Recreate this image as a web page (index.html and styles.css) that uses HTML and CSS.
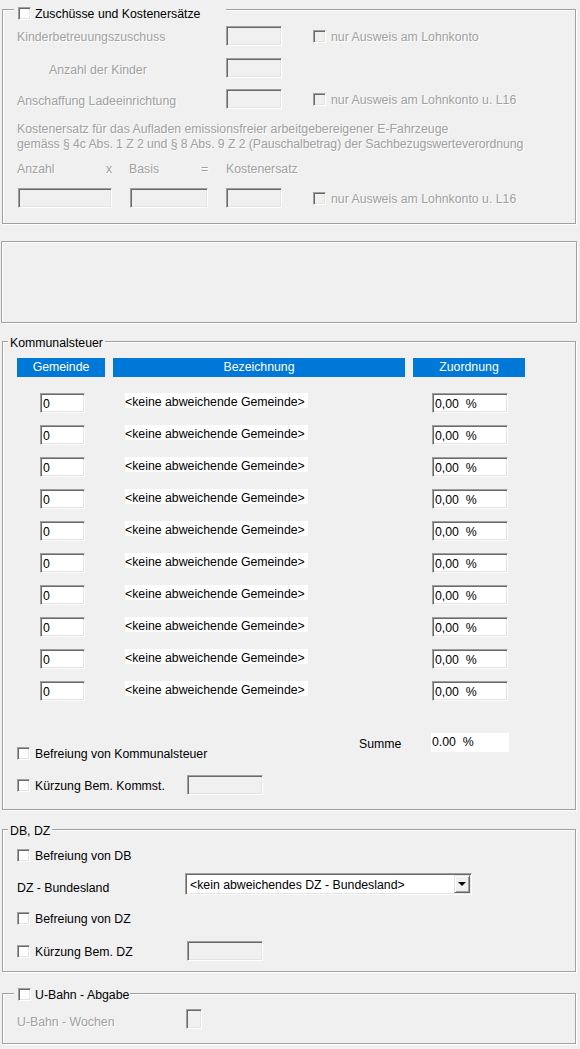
FILE: index.html
```html
<!DOCTYPE html>
<html lang="de">
<head>
<meta charset="utf-8">
<title>Zuschüsse und Kommunalsteuer</title>
<link rel="stylesheet" href="styles.css">
</head>
<body>
<section class="group g1">
  <div class="legend lg-check lg1"><span class="cb"></span><span class="lg-text">Zuschüsse und Kostenersätze</span></div>
  <div class="frow r1">
    <span class="lbl dis w209">Kinderbetreuungszuschuss</span>
    <span class="inp dis w56"></span>
    <span class="cb dis opt"></span><span class="dis opt-text">nur Ausweis am Lohnkonto</span>
  </div>
  <div class="frow r2">
    <span class="lbl dis w209 indent lower">Anzahl der Kinder</span>
    <span class="inp dis w56"></span>
  </div>
  <div class="frow r3">
    <span class="lbl dis w209 lower">Anschaffung Ladeeinrichtung</span>
    <span class="inp dis w56"></span>
    <span class="cb dis opt"></span><span class="dis opt-text">nur Ausweis am Lohnkonto u. L16</span>
  </div>
  <p class="note dis">Kostenersatz für das Aufladen emissionsfreier arbeitgebereigener E-Fahrzeuge<br><span class="tight">gemäss § 4c Abs. 1 Z 2 und § 8 Abs. 9 Z 2 (Pauschalbetrag) der Sachbezugswerteverordnung</span></p>
  <div class="calc-head dis">
    <span class="c-anzahl">Anzahl</span><span class="c-op">x</span><span class="c-basis">Basis</span><span class="c-eq">=</span><span>Kostenersatz</span>
  </div>
  <div class="frow calc-row">
    <span class="inp dis w94"></span>
    <span class="inp dis w78 gap18"></span>
    <span class="inp dis w56 gap18"></span>
    <span class="cb dis opt"></span><span class="dis opt-text">nur Ausweis am Lohnkonto u. L16</span>
  </div>
</section>

<section class="group g2"></section>

<section class="group g3">
  <div class="legend lg-plain"><span class="lg-text">Kommunalsteuer</span></div>
  <div class="heads">
    <div class="head h-gem">Gemeinde</div>
    <div class="head h-bez">Bezeichnung</div>
    <div class="head h-zuo">Zuordnung</div>
  </div>
  <div class="k-rows">
    <div class="krow"><span class="inp w45">0</span><span class="k-name"><span class="k-chip">&lt;keine abweichende Gemeinde&gt;</span></span><span class="inp w76 pct">0,00  %</span></div>
    <div class="krow"><span class="inp w45">0</span><span class="k-name"><span class="k-chip">&lt;keine abweichende Gemeinde&gt;</span></span><span class="inp w76 pct">0,00  %</span></div>
    <div class="krow"><span class="inp w45">0</span><span class="k-name"><span class="k-chip">&lt;keine abweichende Gemeinde&gt;</span></span><span class="inp w76 pct">0,00  %</span></div>
    <div class="krow"><span class="inp w45">0</span><span class="k-name"><span class="k-chip">&lt;keine abweichende Gemeinde&gt;</span></span><span class="inp w76 pct">0,00  %</span></div>
    <div class="krow"><span class="inp w45">0</span><span class="k-name"><span class="k-chip">&lt;keine abweichende Gemeinde&gt;</span></span><span class="inp w76 pct">0,00  %</span></div>
    <div class="krow"><span class="inp w45">0</span><span class="k-name"><span class="k-chip">&lt;keine abweichende Gemeinde&gt;</span></span><span class="inp w76 pct">0,00  %</span></div>
    <div class="krow"><span class="inp w45">0</span><span class="k-name"><span class="k-chip">&lt;keine abweichende Gemeinde&gt;</span></span><span class="inp w76 pct">0,00  %</span></div>
    <div class="krow"><span class="inp w45">0</span><span class="k-name"><span class="k-chip">&lt;keine abweichende Gemeinde&gt;</span></span><span class="inp w76 pct">0,00  %</span></div>
    <div class="krow"><span class="inp w45">0</span><span class="k-name"><span class="k-chip">&lt;keine abweichende Gemeinde&gt;</span></span><span class="inp w76 pct">0,00  %</span></div>
    <div class="krow"><span class="inp w45">0</span><span class="k-name"><span class="k-chip">&lt;keine abweichende Gemeinde&gt;</span></span><span class="inp w76 pct">0,00  %</span></div>
  </div>
  <div class="sum-row">
    <label class="check c-befreiung"><span class="cb"></span><span class="ctext">Befreiung von Kommunalsteuer</span></label>
    <span class="sum-label">Summe</span>
    <span class="sum-box">0.00  %</span>
  </div>
  <div class="frow k-kuerz">
    <label class="check w170"><span class="cb"></span><span class="ctext">Kürzung Bem. Kommst.</span></label>
    <span class="inp dis w76"></span>
  </div>
</section>

<section class="group g4">
  <div class="legend lg-plain"><span class="lg-text">DB, DZ</span></div>
  <div class="frow d1">
    <label class="check"><span class="cb"></span><span class="ctext">Befreiung von DB</span></label>
  </div>
  <div class="frow d2">
    <span class="lbl w168 dz-lbl">DZ - Bundesland</span>
    <div class="select">
      <span class="select-text">&lt;kein abweichendes DZ - Bundesland&gt;</span>
      <span class="select-btn"><span class="tri"></span></span>
    </div>
  </div>
  <div class="frow d3">
    <label class="check"><span class="cb"></span><span class="ctext">Befreiung von DZ</span></label>
  </div>
  <div class="frow d4">
    <label class="check w170"><span class="cb"></span><span class="ctext">Kürzung Bem. DZ</span></label>
    <span class="inp dis w76"></span>
  </div>
</section>

<section class="group g5">
  <div class="legend lg-check lg5"><span class="cb"></span><span class="lg-text">U-Bahn - Abgabe</span></div>
  <div class="frow u1">
    <span class="lbl dis w169 ub-lbl">U-Bahn - Wochen</span>
    <span class="inp dis w16"></span>
  </div>
</section>
</body>
</html>
```

FILE: styles.css
```css
* { box-sizing: border-box; }
html, body { margin: 0; padding: 0; }
body {
  background: #f0f0f0;
  font-family: "Liberation Sans", Arial, sans-serif;
  font-size: 12.3px;
  color: #000;
  width: 580px;
  height: 1049px;
  overflow: hidden;
}

/* group boxes */
.group {
  position: relative;
  border: 1px solid #a0a0a0;
  box-shadow: inset 1px 1px 0 #fff, 1px 1px 0 #fff;
  margin-left: 2px;
  width: 574px;
  padding-left: 14px;
}
.g1 { margin-top: 9px; height: 215px; padding-top: 16px; }
.g2 { margin-top: 17px; margin-left: 1px; width: 576px; height: 82px; }
.g3 { margin-top: 18px; height: 469px; padding-top: 16px; }
.g4 { margin-top: 19px; height: 143px; padding-top: 15px; }
.g5 { margin-top: 21px; height: 51px; padding-top: 15px; }

.legend {
  position: absolute;
  display: flex;
  align-items: center;
  height: 15px;
  line-height: 15px;
  background: #f0f0f0;
  white-space: nowrap;
}
.lg-check { padding-left: 4px; }
.lg-check .lg-text { margin-left: 4px; padding-top: 1px; }
.lg1 { left: 11px; top: -4px; width: 212px; }
.lg5 { left: 11px; top: -7px; width: 116px; }
.lg-plain { left: 5px; top: -6px; padding: 0 2px; }

/* generic row */
.frow { display: flex; align-items: center; height: 20px; }
.r2 { margin-top: 12px; }
.r3 { margin-top: 11px; }

.lbl { white-space: nowrap; padding-top: 2px; }
.lbl.lower { padding-top: 4px; }
.dz-lbl { padding-top: 8px; }
.ub-lbl { padding-top: 5px; }
.w209 { width: 209px; flex: none; }
.w168 { width: 168px; flex: none; }
.w169 { width: 169px; flex: none; }
.w170 { width: 170px; flex: none; }
.indent { padding-left: 32px; }

.dis { color: #a0a0a0; text-shadow: 1px 1px 0 #fff; }

/* sunken input */
.inp {
  display: block;
  flex: none;
  height: 20px;
  background: #fff;
  border-top: 1px solid #a0a0a0;
  border-left: 1px solid #a0a0a0;
  border-right: 1px solid #fff;
  border-bottom: 1px solid #fff;
  box-shadow: inset 1px 1px 0 #696969, inset -1px -1px 0 #e3e3e3;
  padding-left: 2px;
  padding-top: 1px;
  line-height: 18px;
  white-space: pre;
  color: #000;
}
.inp.dis { background: #f0f0f0; }
.w16 { width: 16px; }
.w45 { width: 45px; }
.w56 { width: 56px; }
.w76 { width: 76px; }
.w78 { width: 78px; }
.w94 { width: 94px; }
.gap18 { margin-left: 18px; }

/* checkbox */
.cb {
  display: block;
  flex: none;
  width: 13px;
  height: 13px;
  background: #fff;
  border-top: 1px solid #a0a0a0;
  border-left: 1px solid #a0a0a0;
  border-right: 1px solid #fff;
  border-bottom: 1px solid #fff;
  box-shadow: inset 1px 1px 0 #696969, inset -1px -1px 0 #e3e3e3;
}
.cb.dis { background: #f0f0f0; }
.opt { margin-left: 31px; }
.opt-text { margin-left: 5px; white-space: nowrap; padding-top: 2px; }

.check { display: flex; align-items: center; white-space: nowrap; }
.check .cb { margin-right: 5px; }
.ctext { padding-top: 1px; }

/* note + calc */
.note { margin: 13px 0 0; line-height: 15px; white-space: nowrap; }
.tight { letter-spacing: -0.08px; }
.calc-head { display: flex; margin-top: 10px; line-height: 15px; height: 15px; }
.c-anzahl { width: 89px; }
.c-op { width: 23px; }
.c-basis { width: 72px; }
.c-eq { width: 25px; }
.calc-row { margin-top: 11px; padding-left: 1px; }

/* Kommunalsteuer */
.heads { display: flex; height: 19px; }
.head {
  background: #0078d7;
  color: #fff;
  text-align: center;
  line-height: 19px;
}
.h-gem { width: 88px; }
.h-bez { width: 292px; margin-left: 8px; }
.h-zuo { width: 112px; margin-left: 8px; }

.k-rows { display: flex; flex-direction: column; gap: 12px; margin-top: 16px; }
.krow { display: flex; align-items: flex-start; height: 20px; }
.krow .w45 { margin-left: 23px; }
.k-name { width: 307px; margin-left: 40px; flex: none; }
.k-chip {
  display: block;
  background: #fff;
  height: 15px;
  line-height: 19px;
  width: 183px;
  white-space: nowrap;
}
.pct { padding-left: 2px; }

.sum-row { display: flex; height: 27px; margin-top: 32px; }
.c-befreiung { width: 342px; align-self: flex-end; height: 13px; }
.sum-label { width: 72px; margin-top: 4px; line-height: 15px; }
.sum-box {
  width: 78px;
  height: 19px;
  background: #fff;
  line-height: 18px;
  padding-left: 1px;
  white-space: pre;
}
.k-kuerz { margin-top: 15px; }

/* DB, DZ */
.d2 { margin-top: 8px; height: 22px; }
.d3 { margin-top: 13px; }
.d4 { margin-top: 13px; }

.select {
  position: relative;
  width: 287px;
  height: 22px;
  background: #fff;
  border-top: 1px solid #a0a0a0;
  border-left: 1px solid #a0a0a0;
  border-right: 1px solid #fff;
  border-bottom: 1px solid #fff;
  box-shadow: inset 1px 1px 0 #696969, inset -1px -1px 0 #e3e3e3;
  display: flex;
  align-items: center;
  padding-left: 4px;
}
.select-text { flex: 1; white-space: nowrap; padding-top: 1px; }
.select-btn {
  width: 16px;
  height: 18px;
  margin-right: 1px;
  background: #f0f0f0;
  border-top: 1px solid #e3e3e3;
  border-left: 1px solid #e3e3e3;
  border-right: 1px solid #696969;
  border-bottom: 1px solid #696969;
  box-shadow: inset 1px 1px 0 #fff, inset -1px -1px 0 #a0a0a0;
  display: flex;
  align-items: center;
  justify-content: center;
}
.tri {
  width: 0;
  height: 0;
  border-left: 4px solid transparent;
  border-right: 4px solid transparent;
  border-top: 4px solid #000;
}
```
